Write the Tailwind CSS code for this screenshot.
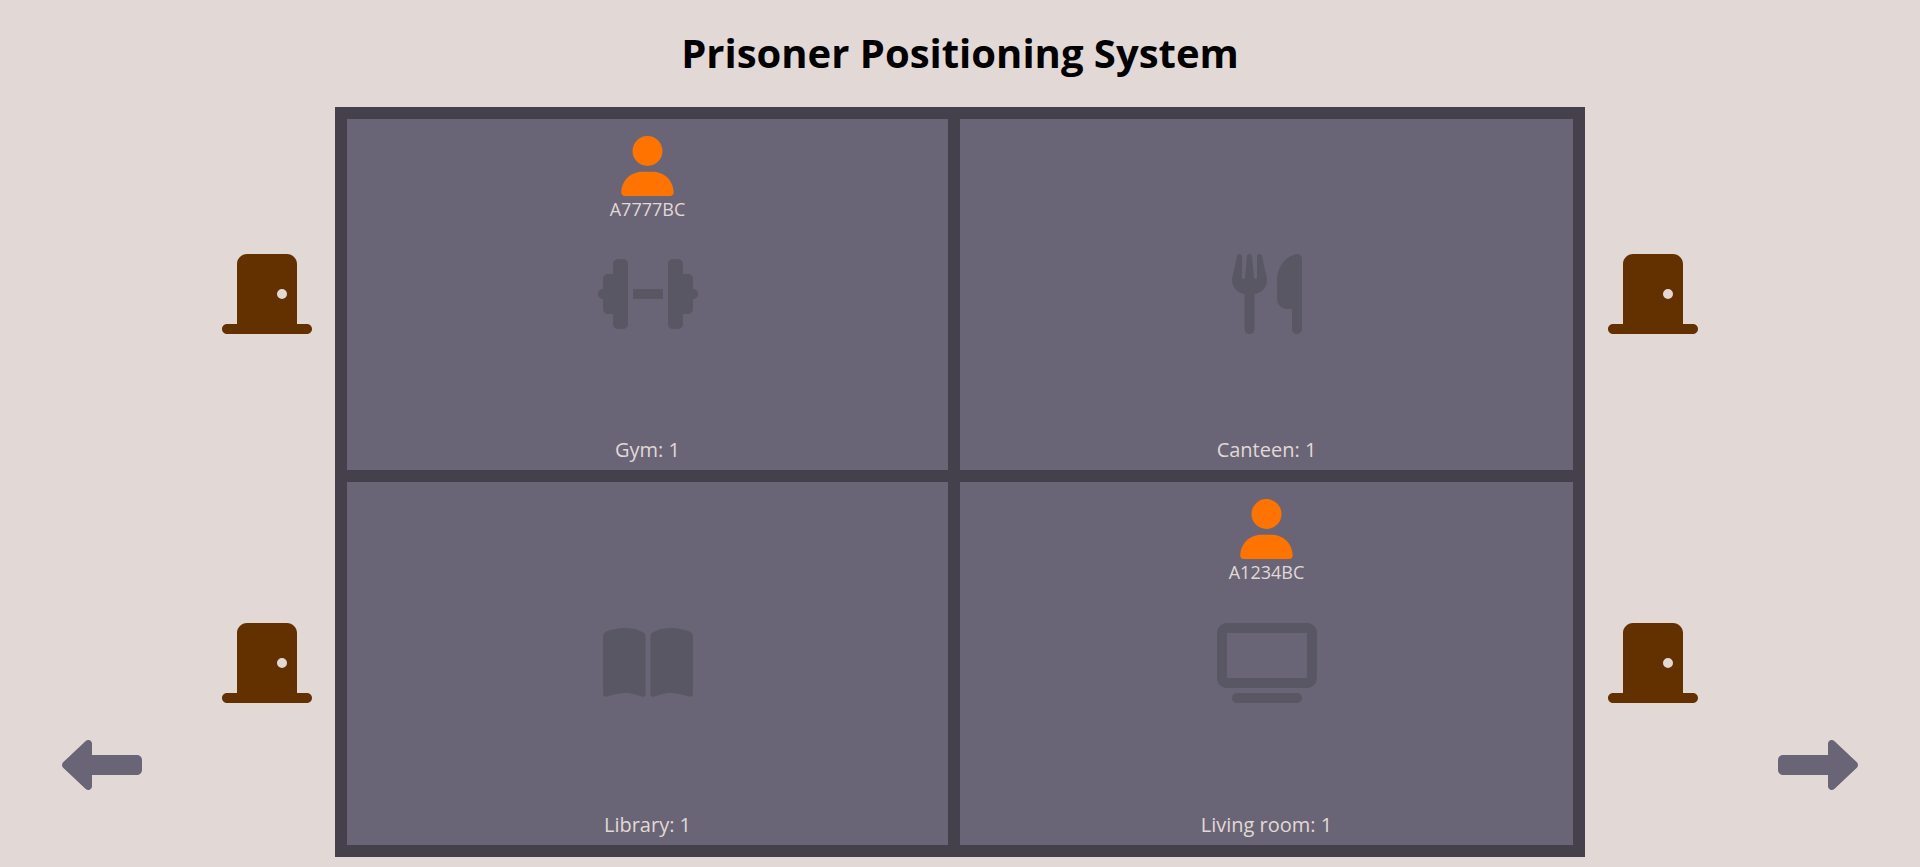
<!DOCTYPE html>
<html lang="en">
<head>
<meta charset="utf-8">
<meta name="viewport" content="width=device-width, initial-scale=1">
<title>Prisoner Positioning System</title>
<script src="https://cdn.jsdelivr.net/npm/@tailwindcss/browser@4"></script>
</head>
<body class="min-h-screen bg-[#e2d8d6] font-['Open_Sans',sans-serif] text-[#e2d8d6]">
<svg class="hidden" aria-hidden="true">
  <symbol id="door" viewBox="0 0 576 512"><path d="M96 64c0-35.300 28.700-64 64-64L416 0c35.300 0 64 28.700 64 64l0 384 64 0c17.700 0 32 14.300 32 32s-14.300 32-32 32l-112 0-288 0L32 512c-17.700 0-32-14.300-32-32s14.300-32 32-32l64 0L96 64zM384 288a32 32 0 1 0 0-64 32 32 0 1 0 0 64z"/></symbol>
  <symbol id="person" viewBox="0 0 448 512"><path d="M224 256A128 128 0 1 0 224 0a128 128 0 1 0 0 256zm-45.700 48C79.800 304 0 383.800 0 482.300C0 498.700 13.300 512 29.700 512l388.600 0c16.400 0 29.700-13.300 29.700-29.700C448 383.800 368.200 304 269.700 304l-91.400 0z"/></symbol>
  <symbol id="arrow" viewBox="0 0 512 512"><path d="M177.500 414c-8.800 3.800-19 2-26-4.600l-144-136C2.700 268.900 0 262.600 0 256s2.700-12.900 7.500-17.400l144-136c7-6.600 17.200-8.400 26-4.600s14.500 12.500 14.500 22l0 72 288 0c17.700 0 32 14.300 32 32l0 64c0 17.700-14.300 32-32 32l-288 0 0 72c0 9.600-5.700 18.200-14.500 22z"/></symbol>
</svg>

<header class="px-4 pt-[26px] pb-[27px]">
  <h1 class="text-center text-[40px] leading-[54px] font-bold text-black">Prisoner Positioning System</h1>
</header>

<main class="flex justify-between pb-[10px]">
  <nav class="flex flex-1 items-end justify-start pb-[52px] pl-[62px]" aria-label="Previous">
    <button type="button" aria-label="Previous wing" class="text-[#696576]"><svg class="size-20 fill-current"><use href="#arrow"/></svg></button>
  </nav>

  <div class="mr-[23px] grid grid-rows-2 items-center pt-[2px] pb-[10px] text-[#633000]">
    <svg class="h-20 w-[90px] fill-current" role="img" aria-label="Gym door"><use href="#door"/></svg>
    <svg class="h-20 w-[90px] fill-current" role="img" aria-label="Library door"><use href="#door"/></svg>
  </div>

  <div class="grid w-full max-w-[1250px] grid-cols-2 grid-rows-[minmax(375px,auto)_minmax(375px,auto)] text-center">
    <section class="grid grid-rows-[1fr_80px_1fr] justify-items-center border-12 border-[#44414d] bg-[#696576] pb-px">
      <div class="pt-[17px]">
        <svg class="mx-auto h-[60px] w-[53px] fill-[#ff7400]" aria-hidden="true"><use href="#person"/></svg>
        <p class="text-[18px] leading-[26px]">A7777BC</p>
      </div>
      <svg class="h-20 w-[100px] fill-[#595763]" viewBox="0 0 640 512" aria-hidden="true"><path d="M96 64c0-17.700 14.300-32 32-32l32 0c17.700 0 32 14.300 32 32l0 160 0 64 0 160c0 17.700-14.300 32-32 32l-32 0c-17.700 0-32-14.300-32-32l0-64-32 0c-17.700 0-32-14.300-32-32l0-64c-17.700 0-32-14.300-32-32s14.300-32 32-32l0-64c0-17.700 14.300-32 32-32l32 0 0-64zm448 0l0 64 32 0c17.700 0 32 14.300 32 32l0 64c17.700 0 32 14.300 32 32s-14.300 32-32 32l0 64c0 17.700-14.300 32-32 32l-32 0 0 64c0 17.700-14.300 32-32 32l-32 0c-17.700 0-32-14.300-32-32l0-160 0-64 0-160c0-17.700 14.300-32 32-32l32 0c17.700 0 32 14.300 32 32zM416 224l0 64-192 0 0-64 192 0z"/></svg>
      <h2 class="self-end pb-[5px] text-[20px] leading-7">Gym: 1</h2>
    </section>

    <section class="grid grid-rows-[1fr_80px_1fr] justify-items-center border-12 border-l-0 border-[#44414d] bg-[#696576] pb-px">
      <div></div>
      <svg class="h-20 w-[70px] fill-[#595763]" viewBox="0 0 448 512" aria-hidden="true"><path d="M416 0C400 0 288 32 288 176l0 112c0 35.300 28.700 64 64 64l32 0 0 128c0 17.700 14.300 32 32 32s32-14.300 32-32l0-128 0-112 0-208c0-17.700-14.300-32-32-32zM64 16C64 7.800 57.900 1 49.700 .1S34.200 4.600 32.400 12.500L2.100 148.800C.7 155.100 0 161.500 0 167.900c0 45.900 35.100 83.600 80 87.700L80 480c0 17.700 14.300 32 32 32s32-14.300 32-32l0-224.400c44.900-4.100 80-41.800 80-87.700c0-6.400-.7-12.800-2.100-19.100L191.600 12.500c-1.800-8-9.300-13.300-17.400-12.400S160 7.800 160 16l0 134.200c0 5.400-4.400 9.800-9.800 9.800c-5.100 0-9.300-3.900-9.800-9L127.900 14.600C127.200 6.300 120.300 0 112 0s-15.200 6.300-15.900 14.600L83.700 151c-.5 5.100-4.700 9-9.800 9c-5.400 0-9.800-4.400-9.800-9.800L64 16z"/></svg>
      <h2 class="self-end pb-[5px] text-[20px] leading-7">Canteen: 1</h2>
    </section>

    <section class="grid grid-rows-[1fr_80px_1fr] justify-items-center border-12 border-t-0 border-[#44414d] bg-[#696576] pb-px">
      <div></div>
      <svg class="h-20 w-[90px] fill-[#595763]" viewBox="0 0 576 512" aria-hidden="true"><path d="M249.600 471.500c10.800 3.800 22.400-4.100 22.400-15.500l0-377.400c0-4.200-1.600-8.400-5-11C247.400 52 202.400 32 144 32C93.500 32 46.300 45.300 18.100 56.100C6.800 60.500 0 71.700 0 83.800L0 454.100c0 11.900 12.800 20.200 24.100 16.500C55.600 460.100 105.500 448 144 448c33.900 0 79 14 105.600 23.500zm76.800 0C353 462 398.100 448 432 448c38.500 0 88.400 12.100 119.900 22.600c11.300 3.800 24.100-4.600 24.100-16.500l0-370.300c0-12.100-6.800-23.300-18.100-27.600C529.700 45.300 482.500 32 432 32c-58.400 0-103.400 20-123 35.600c-3.300 2.600-5 6.800-5 11L304 456c0 11.400 11.700 19.300 22.400 15.500z"/></svg>
      <h2 class="self-end pb-[5px] text-[20px] leading-7">Library: 1</h2>
    </section>

    <section class="grid grid-rows-[1fr_80px_1fr] justify-items-center border-12 border-t-0 border-l-0 border-[#44414d] bg-[#696576] pb-px">
      <div class="pt-[17px]">
        <svg class="mx-auto h-[60px] w-[53px] fill-[#ff7400]" aria-hidden="true"><use href="#person"/></svg>
        <p class="text-[18px] leading-[26px]">A1234BC</p>
      </div>
      <svg class="h-20 w-[100px] fill-[#595763]" viewBox="0 0 640 512" aria-hidden="true"><path d="M64 64l0 288 512 0 0-288L64 64zM0 64C0 28.700 28.700 0 64 0L576 0c35.300 0 64 28.700 64 64l0 288c0 35.300-28.700 64-64 64L64 416c-35.300 0-64-28.700-64-64L0 64zM128 448l384 0c17.700 0 32 14.300 32 32s-14.300 32-32 32l-384 0c-17.700 0-32-14.300-32-32s14.300-32 32-32z"/></svg>
      <h2 class="self-end pb-[5px] text-[20px] leading-7">Living room: 1</h2>
    </section>
  </div>

  <div class="ml-[23px] grid grid-rows-2 items-center pt-[2px] pb-[10px] text-[#633000]">
    <svg class="h-20 w-[90px] fill-current" role="img" aria-label="Canteen door"><use href="#door"/></svg>
    <svg class="h-20 w-[90px] fill-current" role="img" aria-label="Living room door"><use href="#door"/></svg>
  </div>

  <nav class="flex flex-1 items-end justify-end pr-[62px] pb-[52px]" aria-label="Next">
    <button type="button" aria-label="Next wing" class="text-[#696576]"><svg class="size-20 -scale-x-100 fill-current"><use href="#arrow"/></svg></button>
  </nav>
</main>
</body>
</html>
